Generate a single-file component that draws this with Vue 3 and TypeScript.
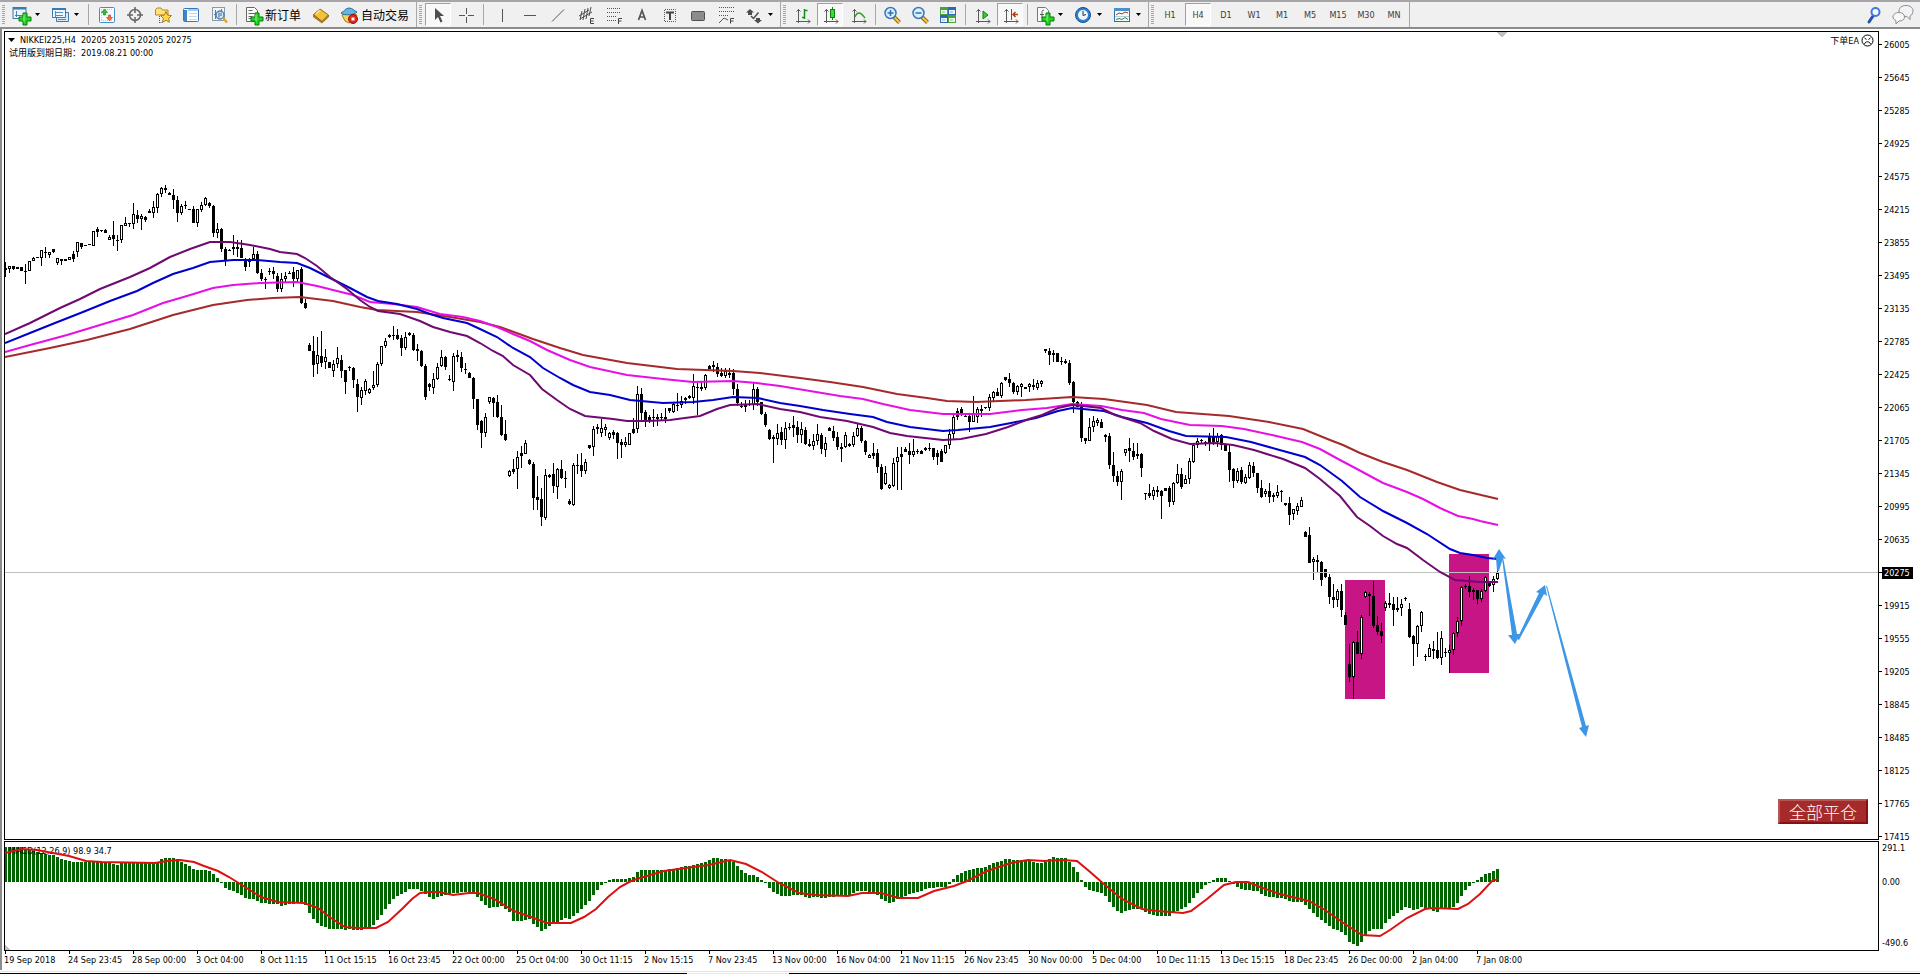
<script setup lang="ts">
interface Bar { x: number; hi: number; top: number; height: number; lo: number; up: boolean }
interface Tool { id: string; icon: string; text?: string; split?: boolean; pressed?: boolean; sepBefore?: 'narrow' | 'wide' }

const STEP = 4
const FIRST_X = 5

/* Bars are written as high,top,bottom,low in thirds of a chart pixel below the base; "+" marks a rising bar. */
const segments: { base: number; bars: string }[] = [
  { base: 160, bars: `307,325,330,350 +318,318,328,338 318,318,328,330 321,321,326,326 320,320,332,333 311,333,336,372 +303,303,334,334 +291,293,304,304 291,291,294,294 +270,270,293,318
260,275,280,295 +275,275,285,293 267,267,275,278 +293,293,310,314 297,297,304,314 297,297,302,302 +290,290,299,299 273,282,297,305 +246,246,276,290 250,250,260,268
256,256,259,259 252,252,256,256 +213,213,257,257 202,208,215,230 210,210,213,216 207,210,218,218 +226,232,238,240 183,226,236,258 225,240,243,272 +195,195,241,250
+172,188,195,195 188,190,193,200 +130,163,192,207 150,165,178,190 +162,168,176,210 168,170,180,186 147,153,160,160 +122,140,160,174 +100,102,143,158 +80,84,103,110
75,84,90,98 96,99,106,106 88,105,120,146 108,120,158,185 +132,137,160,166 124,134,138,146 146,148,151,151 138,148,190,190 +148,148,190,200 +126,134,149,156
+112,115,134,138 126,130,138,144 135,138,218,230 +188,208,220,235 203,207,267,277 262,267,302,318 267,270,273,273 225,262,268,285 240,260,268,290 240,265,295,295
294,298,320,333 294,300,305,320 +260,282,297,300 272,283,338,342 326,340,358,362 350,357,360,386 325,332,335,345 320,333,342,357 340,347,386,395 +340,358,386,396
+335,347,358,370 333,338,342,342 322,337,358,382 +330,330,358,365 320,328,428,432 418,428,445,448 550,555,573,573 528,573,615,651 +532,585,613,642 513,588,608,620
+568,590,607,628 605,607,623,624 +600,612,632,650 +561,595,611,625 586,600,632,655 630,630,665,701 618,622,625,632 620,624,661,685 656,671,712,756 +680,690,713,734
+656,664,692,705 +685,688,698,702 +633,674,682,690 +605,613,674,680 +559,559,613,618 +535,543,558,565 522,525,530,534 498,525,528,540 508,525,537,540 525,535,565,587
+515,530,563,570 516,519,525,528 519,525,570,573 553,568,572,603 570,573,617,621 612,617,711,720 670,673,681,692 +640,657,684,703 +608,620,657,660 +570,590,618,621
588,590,620,630 645,657,661,664 +580,588,665,692 570,586,590,605 575,590,625,635 610,628,631,642 635,640,653,655 651,653,717,746 717,718,795,810` },
  { base: 320, bars: `300,303,338,383 +280,290,338,350 +230,232,245,252 232,234,248,290 225,246,292,294 255,291,345,348 300,343,361,363 +450,453,467,470 418,447,456,462 +393,410,448,506 378,400,408,443
+360,370,402,402 418,420,433,436 426,432,533,570 468,530,540,570 505,538,592,618 +447,465,593,600 462,465,472,474 430,463,498,518 +444,448,500,538 420,448,473,476
453,473,476,503 536,542,553,555 +430,436,554,558 403,434,437,461 400,434,453,470 +418,425,453,462 374,376,383,388 +318,328,382,408 313,322,328,343 +298,325,340,350
+313,320,326,348 +335,338,353,360 330,336,344,356 336,340,370,417 358,367,375,413 +350,367,375,380 +338,338,374,374 295,326,338,342 +198,223,327,338 205,223,278,300
270,276,304,322 285,290,300,308 268,290,295,320 282,290,297,318 278,290,295,302 265,290,297,308 264,265,272,278 +248,253,275,280 220,255,258,272 +228,243,255,265
230,234,240,252 226,228,235,238 +162,198,235,252 190,202,205,285 186,200,206,212 +162,166,205,210 136,139,146,148 123,136,140,155 128,140,163,170 145,160,168,172
+145,152,168,173 145,158,165,175 147,158,207,225 192,207,250,258 245,258,262,264 240,255,262,275 240,252,256,258 +190,208,255,270 200,208,247,257 245,247,283,286
275,283,315,320 328,330,357,360 345,352,358,428 +312,340,358,375 320,337,360,374 +305,325,360,388 310,322,325,330 287,316,325,350 302,322,345,368 +305,328,345,368
320,330,372,374 358,372,377,380 +342,362,378,390 +312,343,362,374 340,345,388,402 +350,368,390,410 322,325,332,334 318,333,353,363 335,350,380,390 370,382,388,426
+335,346,382,384 370,372,378,380 +335,347,375,380 +308,325,348,352 318,325,362,368 360,362,397,406 +402,404,413,414 370,400,408,417 388,400,442,460 432,442,508,510
+438,460,492,496 +492,495,503,506 +413,428,498,500 +382,412,427,510 382,402,412,510 380,387,395,396 370,393,406,431 +358,392,406,412 388,392,395,402 391,393,402,403
382,385,390,392 370,383,386,394 383,385,410,420 390,400,412,436 388,392,425,426` },
  { base: 330, bars: `+346,346,370,372 +298,313,346,356 +248,262,313,330 235,243,262,270 232,236,252,258 256,258,261,262 252,258,276,305 +198,250,275,276 +232,237,262,278 225,238,242,262
230,232,235,236 +193,200,235,242 +182,185,205,215 175,187,197,198 +155,160,197,203 140,142,150,152 130,148,160,170 157,160,186,193 +165,168,187,195 +160,163,170,200
170,172,176,177 +160,163,172,185 148,165,170,180 +150,160,175,180 +150,153,160,172 57,58,62,68 55,62,75,104 60,70,75,97 69,70,95,96 80,92,95,105
88,93,100,102 90,98,160,166 152,157,217,250 213,215,230,232 217,230,325,335 324,325,332,342 +265,290,332,334 +258,273,290,305 +265,270,276,288 268,275,293,294
312,315,320,335 308,318,405,418 365,405,438,455 422,438,455,468 +416,424,455,510 +356,358,368,378 323,355,362,395 340,363,380,390 338,372,378,388 370,373,413,440
488,490,493,510 462,490,497,505 +470,480,497,510 468,480,485,500 480,484,497,567 473,475,482,484 468,475,515,530 +455,460,515,525 +403,432,458,462 415,432,470,478
+435,447,461,462 +385,394,446,462 +342,345,395,398 +325,333,346,355 328,330,334,343 334,336,342,348 308,322,340,362 295,320,335,345 +310,317,335,352 312,315,345,360
342,345,362,364 345,365,420,455 415,418,452,473 +413,422,453,460 410,420,455,462 +432,440,460,461 +395,405,443,447 397,408,430,440 429,430,475,488 450,475,500,503
+478,482,490,500 458,482,500,520 490,495,502,517 +465,487,497,505 480,483,486,517 518,520,526,528 502,520,555,585 +536,538,553,570 +518,528,543,555 +500,510,530,532 602,605,620,622` },
  { base: 420, bars: `321,345,428,429 +412,417,425,480 405,420,426,458 424,426,480,497 446,447,472,474 462,472,532,552 492,532,540,563 +508,514,539,562 493,513,570,592 576,585,614,615
672,733,770,785 +664,667,770,836 633,667,701,702 +586,592,701,718 +514,515,532,534 515,522,527,587 482,527,617,625 587,615,637,645 608,633,648,668 +543,549,565,573
520,550,554,565 530,553,570,617 530,564,570,577 +538,552,564,587 531,535,538,544 550,568,650,654 646,648,673,738 +615,619,673,710 +573,577,619,635 703,708,711,722
+673,685,710,712 662,688,692,717 637,690,713,718 +633,653,713,735 685,697,700,710 +675,691,699,758 +636,638,690,705 +592,604,640,652 +497,502,604,617 492,497,500,507
468,498,515,532 503,510,515,540 510,511,536,551 +508,514,536,546 +468,470,514,516 484,490,497,500 +467,478,495,515 +445,458,478,480` },
]

const bars: Bar[] = []
for (const seg of segments) {
  for (const token of seg.bars.trim().split(/\s+/)) {
    const [hi, top, bottom, lo] = token.split(',').map(v => seg.base + Math.round(Math.abs(Number(v)) / 3))
    const up = token.startsWith('+')
    bars.push({
      x: FIRST_X + bars.length * STEP, hi, top, lo, up,
      height: Math.max(bottom - top, up ? 3 : 1),
    })
  }
}

const averages = [
  { color: '#a52a2a', points: '5,357 50,348 87,340 130,329 173,315 213,305 247,300 273,298 300,297 333,301 360,307 377,310 417,312 450,317 480,322 500,327 533,339 560,348 583,355 627,363 677,369 733,371 760,373 800,378 830,382 863,387 897,394 927,398 947,401 976,402 1026,400 1072,397 1104,399 1147,405 1176,412 1229,416 1269,422 1303,429 1330,440 1343,445 1360,453 1383,462 1407,470 1437,482 1460,490 1498,499' },
  { color: '#e60fe6', points: '5,352 30,345 67,335 100,325 133,315 163,303 187,296 213,288 233,285 260,283 297,282 317,286 333,290 353,295 370,302 393,304 417,307 440,314 463,317 480,321 497,327 513,334 530,341 547,350 570,360 590,367 627,375 663,379 693,382 733,381 757,383 780,386 810,391 840,396 863,399 883,404 910,410 943,414 990,414 1022,410 1047,408 1072,404 1101,406 1122,410 1144,413 1161,419 1190,425 1222,426 1244,429 1272,435 1302,442 1320,449 1340,460 1357,469 1383,483 1407,492 1423,499 1440,508 1458,516 1473,519 1480,521 1498,525' },
  { color: '#0000cd', points: '5,343 30,333 55,323 83,312 110,301 137,291 153,283 173,274 193,268 210,262 233,260 257,260 280,262 297,263 310,268 330,278 350,288 367,297 378,301 397,304 417,309 430,314 443,318 467,323 480,329 497,337 513,348 530,357 543,368 560,378 573,385 590,392 610,395 630,400 663,403 693,402 713,400 733,397 758,398 780,403 800,406 823,410 850,414 873,417 887,422 910,427 943,431 958,430 990,427 1011,423 1036,418 1058,411 1072,408 1083,409 1104,411 1122,417 1147,423 1169,431 1186,436 1226,437 1251,442 1276,449 1305,457 1320,465 1342,481 1360,497 1383,511 1407,523 1427,534 1450,549 1460,553 1473,555 1487,558 1498,559' },
  { color: '#700a70', points: '5,334 30,323 60,308 80,299 100,289 130,277 150,268 170,257 190,249 210,242 230,242 250,245 270,249 280,252 297,254 305,258 317,266 330,277 347,289 360,300 370,307 378,311 400,314 420,321 433,327 450,332 467,336 480,343 493,351 503,356 513,365 530,375 542,389 557,400 570,409 585,416 613,419 627,421 647,421 670,420 700,416 717,409 730,405 758,404 780,409 800,412 820,417 847,421 873,427 890,433 907,436 943,440 961,439 986,434 1008,427 1029,419 1042,415 1058,408 1072,405 1083,406 1101,408 1115,415 1140,423 1154,431 1172,439 1190,444 1215,443 1233,445 1254,450 1283,459 1305,468 1320,479 1340,496 1357,517 1370,526 1383,536 1397,544 1407,548 1423,560 1440,572 1455,580 1480,582 1498,582' },
]

/* Histogram turning points: bar index and distance from 830 in thirds of a pixel. */
const ZERO_Y = 882
const histKeys = '0:52 4:52 9:70 12:76 14:87 16:93 18:96 22:94 26:97 28:104 29:100 36:98 38:95 39:87 40:84 42:84 43:87 45:102 46:108 47:117 48:120 51:122 52:133 53:143 54:158 55:174 56:180 58:188 60:204 62:207 64:218 66:222 68:222 69:227 71:222 74:218 75:226 76:248 77:266 78:279 79:288 80:292 81:296 84:298 85:300 86:298 88:300 89:300 91:296 92:285 93:271 94:255 95:238 96:222 97:208 98:198 99:191 100:186 101:177 103:177 104:183 105:193 107:206 109:198 110:196 112:190 114:186 116:186 118:200 119:214 120:226 121:233 124:228 126:246 127:272 129:272 131:267 132:282 133:290 134:302 135:296 136:287 137:280 139:270 140:264 141:266 142:258 144:238 145:225 146:212 147:195 148:180 149:165 150:158 151:150 152:147 155:147 157:142 158:126 159:120 165:120 168:114 170:109 173:102 175:97 177:84 178:84 180:88 182:97 183:108 184:120 185:129 186:134 187:136 188:141 189:150 190:160 191:174 192:185 193:193 194:198 197:196 199:196 201:203 203:201 205:204 207:200 211:196 213:183 215:183 217:186 218:196 219:208 220:212 221:218 222:215 223:207 225:198 227:188 229:182 231:174 234:170 235:170 236:162 237:148 238:135 240:124 243:115 245:110 247:98 249:92 250:87 254:90 256:92 258:99 260:96 261:87 262:81 263:84 265:85 266:96 267:110 268:125 269:150 270:170 271:180 273:186 274:190 275:198 276:215 277:230 278:242 279:248 280:243 282:236 284:236 285:246 286:251 288:258 291:257 292:248 294:236 295:230 296:218 297:203 298:188 299:177 300:166 301:158 302:150 303:145 305:145 306:154 308:170 309:177 311:180 313:183 314:193 316:200 318:204 319:204 321:212 322:216 324:216 325:225 326:238 327:250 329:270 331:288 332:296 334:305 335:315 336:336 337:342 338:348 339:336 340:316 341:302 342:297 344:296 345:278 346:266 348:250 349:240 350:230 352:239 354:232 355:236 356:238 358:246 359:238 362:232 363:220 364:198 365:180 366:168 367:155 368:150 369:141 370:132 371:129 372:122 373:117'
  .split(' ').map(k => k.split(':').map(Number))

const histogram: { x: number; y: number; height: number }[] = []
for (let k = 1; k < histKeys.length; k++) {
  const [i0, v0] = histKeys[k - 1]
  const [i1, v1] = histKeys[k]
  for (let i = i0; i < i1 || (k === histKeys.length - 1 && i === i1); i++) {
    const y = 830 + Math.round((v0 + ((v1 - v0) * (i - i0)) / (i1 - i0)) / 3)
    histogram.push({ x: FIRST_X + i * STEP - 1, y: Math.min(y, ZERO_Y), height: Math.max(1, Math.abs(ZERO_Y - y)) })
  }
}

const signal = '5,853 14,851 22,849 37,850 53,853 69,856 86,861 102,862 155,863 167,861 180,860 194,862 204,866 218,871 229,877 245,887 261,897 278,902 304,903 318,908 331,918 345,927 359,928 376,928 388,922 402,909 412,899 420,893 429,892 439,892 453,895 469,893 478,893 494,899 514,911 531,917 547,923 571,923 584,917 596,909 608,897 620,887 631,881 640,878 664,871 693,867 709,865 730,860 746,864 762,872 779,883 799,893 816,895 848,896 862,893 881,893 899,898 918,898 934,891 954,886 967,881 987,871 1011,863 1028,860 1044,861 1062,860 1077,861 1089,871 1105,885 1122,899 1142,909 1158,911 1183,913 1191,911 1207,899 1224,885 1236,882 1248,882 1260,887 1280,894 1309,901 1325,910 1345,924 1362,935 1380,936 1390,930 1407,918 1425,909 1433,908 1458,909 1468,904 1480,894 1492,881 1498,879'

const prices = [26005, 25645, 25285, 24925, 24575, 24215, 23855, 23495, 23135, 22785, 22425, 22065, 21705, 21345, 20995, 20635, 20275, 19915, 19555, 19205, 18845, 18485, 18125, 17765, 17415]
const lastPrice = 20275

const times = ['19 Sep 2018', '24 Sep 23:45', '28 Sep 00:00', '3 Oct 04:00', '8 Oct 11:15', '11 Oct 15:15', '16 Oct 23:45', '22 Oct 00:00', '25 Oct 04:00', '30 Oct 11:15', '2 Nov 15:15', '7 Nov 23:45', '13 Nov 00:00', '16 Nov 04:00', '21 Nov 11:15', '26 Nov 23:45', '30 Nov 00:00', '5 Dec 04:00', '10 Dec 11:15', '13 Dec 15:15', '18 Dec 23:45', '26 Dec 00:00', '2 Jan 04:00', '7 Jan 08:00']

const plus = '<path d="M11 7h4v4h4v4h-4v4h-4v-4H7v-4h4z" fill="#25d325" stroke="#087a08"/><path d="M12 8.500v7" stroke="#8dff8d"/>'
const axes = '<path d="M5.500 3v14M3 15.500h14M3.500 5.500l2-2 2 2M15 13.500l2 2-2 2" fill="none" stroke="#5a5a5a"/>'
const lens = '<path d="M11 11l5.500 5.500" stroke="#8a6a10" stroke-width="4"/><path d="M11.500 11.500l5 5" stroke="#f3c84a" stroke-width="2"/><circle cx="7.500" cy="7" r="5.500" fill="#d8efff" stroke="#3c78b4" stroke-width="1.500"/>'

const mainTools: Tool[] = [
  { id: 'New chart', split: true, icon: `<rect x="1" y="1.500" width="13" height="11" fill="#e9f4fc" stroke="#3b7bb0"/><path d="M1 2.500h13" stroke="#3b7bb0" stroke-width="2"/><path d="M4.500 5v6M3 9.500h8" stroke="#4c7fa8" fill="none"/>${plus}` },
  { id: 'Profiles', split: true, icon: '<path d="M5.500 6.500h12v9h-12z" fill="#d7ebf8" stroke="#3b7bb0"/><path d="M1.500 2.500h13v9h-13z" fill="#eef7fd" stroke="#3b7bb0"/><path d="M1 3h14" stroke="#3b7bb0" stroke-width="2"/><path d="M4 6.500h8M4 9.500h8M4.500 5v6M7 13.500h8" stroke="#5b8db4" fill="none"/>' },
  { id: 'Market watch', sepBefore: 'wide', icon: '<rect x="1.500" y="1.500" width="15" height="15" rx="1" fill="#f6fbff" stroke="#3f8fcb"/><path d="M3 3.500h12M3 14.500h12M3.500 3v12" stroke="#b8cfdf" stroke-dasharray="1 1"/><path d="M6.500 3l3 3.500h-2V9h-2V6.500h-2z" fill="#2fc02f" stroke="#118011" stroke-width=".6"/><path d="M11.500 15l3-3.500h-2V9h-2v2.500h-2z" fill="#ff6a30" stroke="#b33a10" stroke-width=".6"/>' },
  { id: 'Data window', icon: '<circle cx="9" cy="9" r="5.500" fill="none" stroke="#666" stroke-width="1.500"/><path d="M9 1v6M9 11v6M1 9h6M11 9h6" stroke="#666" stroke-width="1.500"/>' },
  { id: 'Navigator', icon: '<path d="M1.500 9V3.500L3 2h4l1.500 2H14v5z" fill="#ffe07a" stroke="#b98a1a"/><path d="M5.500 10v7M5.500 16.500h4" stroke="#555" stroke-dasharray="1 1"/><path d="M12 5.500l1.700 3.600 3.800.5-2.800 2.700.7 3.900-3.400-1.900-3.400 1.900.7-3.900-2.800-2.700 3.800-.5z" fill="#ffd84a" stroke="#a97c10"/>' },
  { id: 'Terminal', icon: '<rect x="1.500" y="2.500" width="15" height="13" rx="1" fill="#fff" stroke="#2f78bd"/><path d="M2 4h3v11H2z" fill="#3f86c7"/><path d="M6 4h10" stroke="#8fb8dc" stroke-width="1.500"/><path d="M7 7.500h8M7 10.500h8M7 13.500h8" stroke="#c4d8ea"/>' },
  { id: 'Strategy tester', icon: '<rect x="2.500" y="1.500" width="12" height="13" fill="#f4f4f4" stroke="#8c9aa6"/><path d="M5.500 4v9M11.500 3v4M4 8.500h3" stroke="#5678a0"/><circle cx="10" cy="9" r="4" fill="#cfe6f8" fill-opacity=".8" stroke="#4b84b8" stroke-width="1.500"/><path d="M9 6.500v5M11 7v3" stroke="#35628f"/><path d="M13 12l4 4.500" stroke="#d9a82c" stroke-width="2.500"/>' },
  { id: 'New order', sepBefore: 'narrow', text: '新订单', icon: `<path d="M2.500 1.500h8l3 3v11h-11z" fill="#fafafa" stroke="#666"/><path d="M4.500 4.500h4M4.500 7.500h6M4.500 10.500h4M4.500 12.500h3" stroke="#666"/>${plus}` },
  { id: 'MetaEditor', icon: '<path d="M1.500 8.500L8 3l8.500 6-6.500 6.500z" fill="#f2c23c" stroke="#9a6a0c"/><path d="M1.500 9v2L10 17l6.500-6V9L10 15.500z" fill="#c88c1c" stroke="#8a5a0a" stroke-width=".7"/><path d="M4 8l4-4" stroke="#ffe9a0" stroke-width="1.500"/>' },
  { id: 'AutoTrading', text: '自动交易', icon: '<path d="M2 9l7-2 8 2-3 6-5 2-4-2z" fill="#f5d35a" stroke="#a97d18"/><path d="M1 7c3-1 4-5 8-5s5 3 8 4c-2 3-13 4-16 1z" fill="#66b4e4" stroke="#2d6e9e"/><circle cx="13" cy="13" r="4.500" fill="#d92a1a" stroke="#9a1208"/><rect x="11.500" y="11.500" width="3" height="3" fill="#fff"/>' },
]

const drawTools: Tool[] = [
  { id: 'Cursor', pressed: true, icon: '<path d="M6 2v12l3-3 2.500 5.500 2-1L11 10h4z" fill="#4d4d4d"/>' },
  { id: 'Crosshair', icon: '<path d="M9.500 2v6M9.500 11v6M2 9.500h6M11 9.500h6" stroke="#555"/>' },
  { id: 'Vertical line', sepBefore: 'wide', icon: '<path d="M9.500 3v13" stroke="#555"/>' },
  { id: 'Horizontal line', icon: '<path d="M3 9.500h12" stroke="#555"/>' },
  { id: 'Trendline', icon: '<path d="M3 15.500l12-12" stroke="#555"/>' },
  { id: 'Equidistant channel', icon: '<path d="M2 10l10-6M3 13l12-7M5 5L3 14M8 3L6 14M11 2L9 13M14 1l-2 9" stroke="#4d4d4d" fill="none"/><path d="M17 12.500h-3.500v5H17M13.500 15h3" stroke="#444" fill="none"/>' },
  { id: 'Fibonacci retracement', icon: '<path d="M2 2.500h14M2 6.500h14M2 10.500h9M2 14.500h9" stroke="#555" stroke-dasharray="1 1"/><path d="M13.500 18v-5.500H17M13.500 15h3" stroke="#444" fill="none"/>' },
  { id: 'Text', icon: '<path d="M5.500 14L9 4.500 12.500 14M6.500 11h5" stroke="#555" stroke-width="1.700" fill="none"/>' },
  { id: 'Text label', icon: '<path d="M3.500 4v11.500h11V3.500H3" stroke="#555" stroke-dasharray="1 1" fill="none"/><path d="M5 6.500h8M9 6v8" stroke="#444" stroke-width="2"/>' },
  { id: 'Rectangle', icon: '<rect x="2.500" y="5.500" width="13" height="9" rx="1" fill="#8c8c8c" stroke="#4f4f4f"/>' },
  { id: 'Fibonacci arcs', icon: '<path d="M2 1.500h15M2 5.500h15M2 9.500h10" stroke="#555" stroke-dasharray="1 1"/><path d="M2 17l5-5 4 2" stroke="#555" fill="none"/><path d="M13.500 17.500v-5H17M13.500 15h3" stroke="#444" fill="none"/>' },
  { id: 'Arrows', split: true, icon: '<path d="M5 3l4 3.500H7V9H3V6.500H1zM11 12h4v2h2l-4 3.500L9 14h2z" fill="#4d4d4d"/><path d="M6 10l2.500 2.500 5-6" stroke="#4d4d4d" stroke-width="1.500" fill="none"/>' },
]

const chartTools: Tool[] = [
  { id: 'Bar chart', icon: `${axes}<path d="M11.500 3v10M11.500 4.500h3M9 11.500h3" stroke="#169016" stroke-width="1.500"/>` },
  { id: 'Candlesticks', pressed: true, icon: `${axes}<path d="M11.500 1v13" stroke="#118011"/><rect x="9.500" y="3.500" width="4" height="8" fill="#3edb3e" stroke="#118011"/>` },
  { id: 'Line chart', icon: `${axes}<path d="M6 11c2-5 5-6 10 1" fill="none" stroke="#27a027" stroke-width="1.300"/>` },
  { id: 'Zoom in', sepBefore: 'narrow', icon: `${lens}<path d="M4.500 7h6M7.500 4v6" stroke="#2f6fae" stroke-width="1.500"/>` },
  { id: 'Zoom out', icon: `${lens}<path d="M4.500 7h6" stroke="#2f6fae" stroke-width="1.500"/>` },
  { id: 'Tile windows', icon: '<path d="M1 1h8v8H1z" fill="#4aa52e"/><path d="M9 1h8v8H9z" fill="#2e66b8"/><path d="M1 9h8v8H1z" fill="#2e66b8"/><path d="M9 9h8v8H9z" fill="#4aa52e"/><path d="M2 4h6v4H2zM10 4h6v4h-6zM2 12h6v4H2zM10 12h6v4h-6z" fill="#eef5fa"/><path d="M3 6h3M11 6h3M3 14h3M11 14h3" stroke="#8fb1c8"/>' },
  { id: 'Auto scroll', sepBefore: 'narrow', icon: `${axes}<path d="M10 5l5 4-5 4z" fill="#35cf35" stroke="#138013"/>` },
  { id: 'Chart shift', pressed: true, icon: `${axes}<path d="M10.500 3v11" stroke="#555"/><path d="M17 8.500h-5M14.500 6l-2.500 2.500 2.500 2.500" stroke="#b33c10" stroke-width="1.500" fill="none"/>` },
  { id: 'Indicators', sepBefore: 'narrow', split: true, icon: `<path d="M2.500 1.500h8l3 3v11h-11z" fill="#fafafa" stroke="#777"/><path d="M9 4.500c-2-1-2 1-2 3v5M5 8.500h4" stroke="#555" fill="none"/>${plus}` },
  { id: 'Periods', split: true, icon: '<circle cx="9" cy="9" r="7.500" fill="#2f7fd0" stroke="#154f92"/><circle cx="9" cy="9" r="5" fill="#edf6ff"/><path d="M9 5v4.500l3-1" stroke="#234" fill="none"/>' },
  { id: 'Templates', split: true, icon: '<rect x="1.500" y="2.500" width="15" height="13" fill="#f7fbff" stroke="#2f6ea8"/><path d="M1 3.500h16" stroke="#4a90cc" stroke-width="3"/><path d="M3 9l3-2 3 1 3-2 3 1" stroke="#a13a20" fill="none"/><path d="M2 10.500h14" stroke="#b8cfe0"/><path d="M3 13.500l3-1 3 1 3-2 3 2" stroke="#2c8a3c" fill="none"/>' },
]

const bands = [mainTools, drawTools, chartTools]
const periods = ['H1', 'H4', 'D1', 'W1', 'M1', 'M5', 'M15', 'M30', 'MN']
</script>

<template>
  <div class="terminal">
    <header class="toolbar">
      <div v-for="(band, b) in bands" :key="b" class="band">
        <i class="grip"></i>
        <template v-for="tool in band" :key="tool.id">
          <i v-if="tool.sepBefore" class="sep" :class="tool.sepBefore"></i>
          <button type="button" class="tool" :class="{ split: tool.split, pressed: tool.pressed, labelled: tool.text }" :aria-label="tool.id">
            <svg class="icon" width="18" height="18" viewBox="0 0 18 18" v-html="tool.icon"></svg>
            <span v-if="tool.text" class="caption">{{ tool.text }}</span>
            <svg v-if="tool.split" class="caret" width="5" height="3" viewBox="0 0 5 3"><path d="M0 0h5L2.500 3z" /></svg>
          </button>
        </template>
      </div>
      <div class="band">
        <i class="grip"></i>
        <button v-for="p in periods" :key="p" type="button" class="tool period" :class="{ pressed: p === 'H4' }">{{ p }}</button>
      </div>
      <div class="tail">
        <button type="button" class="tail-button" aria-label="Search">
          <svg width="16" height="18" viewBox="0 0 16 18"><path d="M7 10l-4 6" stroke="#2450b4" stroke-width="3" stroke-linecap="round" /><circle cx="9.500" cy="6" r="4" fill="#f4f9ff" stroke="#3f78d8" stroke-width="2" /></svg>
        </button>
        <button type="button" class="tail-button" aria-label="Messages">
          <svg width="22" height="22" viewBox="0 0 22 22"><path d="M14 1.500c4 0 7 2 7 5.500 0 2-1 4-3 5v3.500L15 12.500c-5 0-8-2-8-5.500s3-5.500 7-5.500z" fill="#f3f3f6" stroke="#8b8b93" /><path d="M7 8.500c3.500 0 5.500 2 5.500 4.500S10 17 7 17l-3 3v-3.500c-2-1-3-2-3-3.500 0-2.500 2.500-4.500 6-4.500z" fill="#fafafc" stroke="#8b8b93" /></svg>
        </button>
      </div>
    </header>

    <main class="workspace">
      <section class="pane price-pane">
        <svg class="plot" shape-rendering="crispEdges">
          <g transform="translate(-5 -32)">
            <rect x="1345" y="580" width="40" height="119" fill="#c71585" />
            <rect x="1449" y="554" width="40" height="119" fill="#c71585" />
            <g v-for="bar in bars" :key="bar.x">
              <rect :x="bar.x" :y="bar.hi" width="1" :height="Math.max(1, bar.lo - bar.hi)" />
              <rect :x="bar.x - 1" :y="bar.top" width="3" :height="bar.height" />
              <rect v-if="bar.up" :x="bar.x" :y="bar.top + 1" width="1" :height="bar.height - 2" fill="#fff" />
            </g>
            <rect x="5" y="572" width="100%" height="1" fill="#c0c0c0" />
            <polyline v-for="line in averages" :key="line.color" class="curve" :points="line.points" :stroke="line.color" />
            <g fill="#3d96e6" shape-rendering="geometricPrecision">
              <path d="M1499 549l7 10-3-1-4 13h-2l-1-13-3 1z" />
              <path d="M1502 558l1-1 14 77h3l-5 10-7-9 4 0z" />
              <path d="M1517 639l22-46-3-1 9-7 2 11-3-2-25 46z" />
              <path d="M1546 586l1 0 39 140 3-1-3 12-7-9 3-1z" />
            </g>
            <path d="M1496 32h12l-6 5z" fill="#c0c0c0" />
          </g>
        </svg>
        <div class="chart-title">
          <p><svg width="7" height="4" viewBox="0 0 7 4"><path d="M0 0h7L3.500 4z" /></svg><span>NIKKEI225,H4&nbsp; 20205 20315 20205 20275</span></p>
          <p class="trial">试用版到期日期：2019.08.21 00:00</p>
        </div>
        <div class="expert">
          <span>下单EA</span>
          <svg width="13" height="13" viewBox="0 0 13 13" fill="none" stroke="#000"><circle cx="6.500" cy="6.500" r="5.500" /><path d="M3.500 10c1-3 5-3 6 0M3.500 4l2 1.500M9.500 4l-2 1.500" /></svg>
        </div>
        <button type="button" class="close-all">全部平仓</button>
      </section>

      <ul class="price-axis">
        <li v-for="p in prices" :key="p" :class="{ last: p === lastPrice }"><span>{{ p }}</span></li>
      </ul>

      <section class="pane macd-pane">
        <svg class="plot" shape-rendering="crispEdges">
          <g transform="translate(-5 -842)">
            <rect v-for="h in histogram" :key="h.x" :x="h.x" :y="h.y" width="3" :height="h.height" fill="#006400" />
            <text class="macd-title" x="9" y="854">MACD(12,26,9) 98.9 34.7</text>
            <polyline class="curve" :points="signal" stroke="#dc1010" />
            <path d="M5 945l5 5h-5z" fill="#c0c0c0" />
          </g>
        </svg>
      </section>

      <ul class="macd-axis">
        <li>291.1</li>
        <li>0.00</li>
        <li>-490.6</li>
      </ul>

      <ul class="time-axis">
        <li v-for="t in times" :key="t">{{ t }}</li>
      </ul>
    </main>
    <footer class="bottom-edge"><i></i></footer>
  </div>
</template>

<style>
body {
  margin: 0;
  background: #fff;
}
</style>

<style scoped>
.terminal {
  box-sizing: border-box;
  display: flex;
  flex-direction: column;
  min-height: 100vh;
  overflow: hidden;
  color: #000;
  font-family: "DejaVu Sans Condensed", "Open Sans", "Noto Sans CJK SC", sans-serif;
  font-size: 9px;
  line-height: 12px;
}
ul,
p {
  margin: 0;
  padding: 0;
  list-style: none;
}
button {
  padding: 0;
  border: 0;
  background: none;
  color: inherit;
  font: inherit;
}
.toolbar {
  box-sizing: border-box;
  display: flex;
  height: 29px;
  border-top: 2px solid #a7a5a8;
  border-bottom: 2px solid #8c8c8c;
  background: #f0f0f0;
}
.band {
  display: flex;
  align-items: center;
  padding-right: 1px;
  border-right: 1px solid #a8a8a8;
}
.grip {
  width: 3px;
  height: 20px;
  margin: 0 2px;
  background: repeating-linear-gradient(#a6a6a6 0 1px, #f0f0f0 1px 2px);
}
.sep {
  width: 1px;
  height: 21px;
  margin: 0 2px 0 3px;
  background: #a8a8a8;
}
.sep.wide {
  margin: 0 4px 0 3px;
}
.tool {
  box-sizing: border-box;
  display: flex;
  align-items: center;
  justify-content: center;
  width: 28px;
  height: 23px;
}
.icon {
  flex: none;
  overflow: visible;
}
.tool.split {
  justify-content: flex-start;
  gap: 5px;
  width: 39px;
  padding-left: 5px;
}
.tool.labelled {
  gap: 3px;
  width: auto;
  padding: 0 6px 0 5px;
}
.caption {
  font-family: "Noto Sans CJK SC", sans-serif;
  font-size: 12px;
  line-height: 18px;
  white-space: nowrap;
}
.tool.pressed {
  width: 26px;
  margin: 0 1px;
  border: 1px solid #a0a0a0;
  border-right-color: #fff;
  border-bottom-color: #fff;
  background: #f8f8f8;
}
.period {
  color: #3c3c3c;
}
.tail {
  display: flex;
  align-items: center;
  gap: 10px;
  margin-left: auto;
  padding-right: 6px;
}
.tail-button {
  display: flex;
}
.workspace {
  display: grid;
  grid-template-columns: minmax(0, 1fr) 41px;
  grid-template-rows: 809px 110px 18px;
  row-gap: 1px;
  padding: 2px 0 0 2px;
  border-left: 2px solid #8c8c8c;
}
.pane {
  position: relative;
  border: 1px solid #000;
  overflow: hidden;
}
.plot {
  display: block;
  width: 100%;
  height: 100%;
}
.curve {
  fill: none;
  stroke-width: 2px;
  shape-rendering: geometricPrecision;
}
.chart-title {
  position: absolute;
  top: 1px;
  left: 3px;
}
.chart-title p {
  display: flex;
  align-items: center;
  gap: 5px;
  height: 13px;
  white-space: nowrap;
}
.chart-title .trial {
  padding-left: 1px;
}
.expert {
  position: absolute;
  top: 2px;
  right: 4px;
  display: flex;
  align-items: center;
  gap: 2px;
}
.close-all {
  position: absolute;
  right: 10px;
  bottom: 15px;
  width: 90px;
  height: 25px;
  border: 2px solid;
  border-color: #b85555 #8b0f0f #8b0f0f #b85555;
  background: #a52a2a;
  color: #fff;
  font-family: "Noto Sans CJK SC", sans-serif;
  font-size: 17px;
  font-weight: 300;
  line-height: 20px;
}
.price-axis {
  margin-top: -3px;
  height: 0;
}
.price-axis li {
  display: flex;
  align-items: center;
  height: 33px;
}
.price-axis li::before {
  content: "";
  width: 3px;
  height: 1px;
  background: #000;
}
.price-axis span {
  padding: 0 3px 0 2px;
}
.price-axis .last span {
  background: #000;
  color: #fff;
}
.macd-axis {
  display: flex;
  flex-direction: column;
  padding: 1px 0 0 3px;
}
.macd-axis li + li {
  margin-top: 22px;
}
.macd-axis li:last-child {
  margin-top: 49px;
}
.macd-title {
  font-size: 9px;
}
.time-axis {
  display: flex;
  margin-top: -1px;
}
.time-axis li {
  flex: none;
  width: 64px;
  white-space: nowrap;
}
.time-axis li::before {
  content: "";
  display: block;
  width: 1px;
  height: 3px;
  margin-left: 1px;
  background: #000;
}
.bottom-edge {
  margin-top: auto;
  border-top: 1px solid #e3e3e3;
  padding-top: 1px;
}
.bottom-edge i {
  display: block;
  height: 1px;
  background: linear-gradient(90deg, #000 687px, #e8e8e8 687px 789px, #000 789px);
}
</style>
